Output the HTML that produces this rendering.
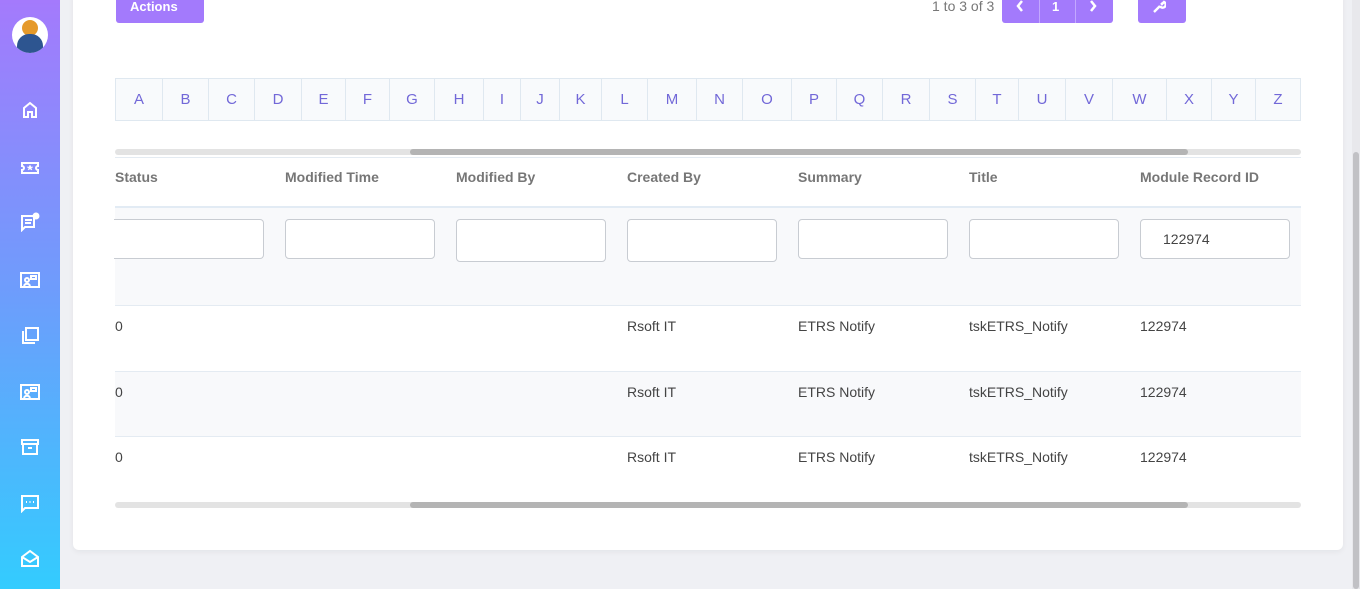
<!DOCTYPE html>
<html><head><style>
*{box-sizing:border-box;margin:0;padding:0}
body{width:1360px;height:589px;overflow:hidden;background:#eff0f4;font-family:"Liberation Sans",sans-serif;position:relative}
.sb{position:absolute;left:0;top:0;width:60px;height:589px;background:linear-gradient(#a47afc,#6d9dfc 50%,#33ccfe)}
.ic{position:absolute;left:20px;width:20px;height:20px}
.card{position:absolute;left:73px;top:-10px;width:1270px;height:560px;background:#fff;border-radius:6px;box-shadow:0 2px 6px rgba(0,0,0,.05)}
.a{position:absolute}
.btn{background:#a37afc;color:#fff;font-weight:bold;font-size:13px;border-radius:0 0 3px 3px}
.alpha{position:absolute;top:78px;height:43px;border:1px solid #dfe8f0;background:#f8fafc;color:#7268d8;font-size:15px;text-align:center;line-height:41px}
.h{position:absolute;top:169px;font-size:14px;color:#555;font-weight:bold;opacity:.8}
.inp{position:absolute;top:219px;width:150px;height:40px;border:1px solid #c8ccd2;border-radius:4px;background:#fff;font-size:14px;color:#444;padding-left:22px;line-height:38px}
.c{position:absolute;font-size:14px;color:#444}
.sc{position:absolute;left:115px;width:1186px;height:6px;background:#e3e3e3;border-radius:3px}
.sc i{position:absolute;left:295px;width:778px;height:6px;background:#b4b4b4;border-radius:3px}
</style></head><body>
<div class="sb">
<div class="a" style="left:12px;top:17px;width:36px;height:36px;border-radius:50%;background:#fff;overflow:hidden">
<div class="a" style="left:10px;top:3px;width:16px;height:16px;border-radius:50%;background:#e59a2a"></div>
<div class="a" style="left:5px;top:17px;width:26px;height:22px;border-radius:12px 12px 0 0;background:#2d5590"></div>
</div>
<svg class="ic" style="top:100px" viewBox="0 0 20 20" fill="none" stroke="#fff" stroke-width="2"><path d="M4 17V8l6-5 6 5v9h-4v-5H8v5z"/></svg>
<svg class="ic" style="top:158px" viewBox="0 0 20 20" fill="none" stroke="#fff" stroke-width="2"><path d="M2 5h16v3a2 2 0 000 4v3H2v-3a2 2 0 000-4z"/><path d="M10 7l1 2h2l-2 1 1 2-2-1-2 1 1-2-2-1h2z" fill="#fff" stroke-width="0.5"/></svg>
<svg class="ic" style="top:212px" viewBox="0 0 20 20" fill="none" stroke="#fff" stroke-width="2"><path d="M2 4h12v11H5l-3 3z"/><path d="M5 8h7M5 11h6"/><circle cx="16" cy="4" r="2.5" fill="#fff"/></svg>
<svg class="ic" style="top:270px" viewBox="0 0 20 20" fill="none" stroke="#fff" stroke-width="2"><rect x="1" y="3" width="18" height="14"/><circle cx="7" cy="10" r="2"/><path d="M4 16c1-3 5-3 6 0M11 6h5v3h-5z"/></svg>
<svg class="ic" style="top:326px" viewBox="0 0 20 20" fill="none" stroke="#fff" stroke-width="2"><rect x="6" y="2" width="12" height="12"/><path d="M3 5v12h12"/></svg>
<svg class="ic" style="top:382px" viewBox="0 0 20 20" fill="none" stroke="#fff" stroke-width="2"><rect x="1" y="3" width="18" height="14"/><circle cx="7" cy="10" r="2"/><path d="M4 16c1-3 5-3 6 0M11 6h5v3h-5z"/></svg>
<svg class="ic" style="top:437px" viewBox="0 0 20 20" fill="none" stroke="#fff" stroke-width="2"><path d="M2 3h16v4H2zM3 7v10h14V7M8 11h4"/></svg>
<svg class="ic" style="top:493px" viewBox="0 0 20 20" fill="none" stroke="#fff" stroke-width="2"><path d="M2 3h16v12H5l-3 3z"/><path d="M6 9h1M9.5 9h1M13 9h1"/></svg>
<svg class="ic" style="top:549px" viewBox="0 0 20 20" fill="none" stroke="#fff" stroke-width="2"><path d="M2 8l8-6 8 6v9H2zM2 8l8 5 8-5"/></svg>
</div>
<div class="card"></div>
<div class="a" style="left:1352px;top:0;width:8px;height:589px;background:#e8e8ec"><div class="a" style="left:1px;top:152px;width:6px;height:437px;background:#c1c1c5;border-radius:3px"></div></div>
<div class="a btn" style="left:116px;top:0;width:88px;height:23px;padding-left:14px;line-height:13px">Actions</div>
<div class="a" style="left:932px;top:0;font-size:14px;color:#777;line-height:13px">1 to 3 of 3</div>
<div class="a btn" style="left:1002px;top:0;width:111px;height:23px"></div>
<div class="a" style="left:1039px;top:0;width:1px;height:23px;background:#c3a8ff"></div>
<div class="a" style="left:1075px;top:0;width:1px;height:23px;background:#c3a8ff"></div>
<svg class="a" style="left:1015px;top:0" width="10" height="12" viewBox="0 0 10 12"><path d="M7 1L3 6l4 5" stroke="#fff" stroke-width="2.5" fill="none"/></svg>
<div class="a" style="left:1052px;top:-1px;color:#fff;font-weight:bold;font-size:13px">1</div>
<svg class="a" style="left:1088px;top:0" width="10" height="12" viewBox="0 0 10 12"><path d="M3 1l4 5-4 5" stroke="#fff" stroke-width="2.5" fill="none"/></svg>
<div class="a btn" style="left:1138px;top:0;width:48px;height:23px"></div>
<svg class="a" style="left:1152px;top:0" width="14" height="14" viewBox="0 0 14 14"><path d="M2 12l6-6M8 6a3 3 0 104-4l-2 2-1-1" stroke="#fff" stroke-width="2.4" fill="none"/></svg>
<div id="al"></div>
<div class="sc" style="top:149px"><i></i></div>
<div class="a" style="left:115px;top:157px;width:1186px;height:1px;background:#e4ebf2"></div>
<div class="a" style="left:115px;top:206px;width:1186px;height:99px;background:#f8f9fb;border-top:2px solid #e2ebf4"></div>
<div class="h" style="left:115px">Status</div><div class="h" style="left:285px">Modified Time</div><div class="h" style="left:456px">Modified By</div><div class="h" style="left:627px">Created By</div><div class="h" style="left:798px">Summary</div><div class="h" style="left:969px">Title</div><div class="h" style="left:1140px">Module Record ID</div>
<div class="inp" style="left:114px;border-left:none;border-radius:0 4px 4px 0"></div>
<div class="inp" style="left:285px"></div><div class="inp" style="left:456px;height:43px"></div><div class="inp" style="left:627px;height:43px"></div><div class="inp" style="left:798px"></div><div class="inp" style="left:969px"></div><div class="inp" style="left:1140px">122974</div>
<div class="a" style="left:115px;top:305px;width:1186px;height:1px;background:#e4ebf2"></div>
<div class="a" style="left:115px;top:371px;width:1186px;height:66px;background:#f8f9fb;border-top:1px solid #e4ebf2;border-bottom:1px solid #e4ebf2"></div>
<div id="rows"></div>
<div class="sc" style="top:502px"><i></i></div>
<script>
var b=[115,162,208,254,301,345,389,434,483,520,559,601,647,696,742,791,836,882,929,975,1018,1065,1112,1166,1211,1255,1300],h='';
for(var i=0;i<26;i++)h+='<div class="alpha" style="left:'+b[i]+'px;width:'+(b[i+1]-b[i]+1)+'px">'+String.fromCharCode(65+i)+'</div>';
document.getElementById('al').innerHTML=h;
var r='',ys=[318,384,449];
ys.forEach(function(y){r+='<div class="c" style="left:115px;top:'+y+'px">0</div><div class="c" style="left:627px;top:'+y+'px">Rsoft IT</div><div class="c" style="left:798px;top:'+y+'px">ETRS Notify</div><div class="c" style="left:969px;top:'+y+'px">tskETRS_Notify</div><div class="c" style="left:1140px;top:'+y+'px">122974</div>';});
document.getElementById('rows').innerHTML=r;
</script>
</body></html>
